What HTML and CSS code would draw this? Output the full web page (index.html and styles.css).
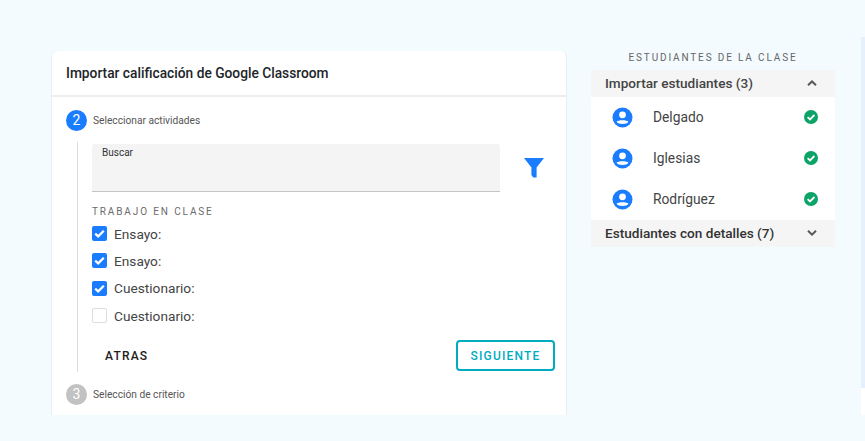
FILE: index.html
```html
<!DOCTYPE html>
<html lang="es">
<head>
    <meta charset="UTF-8">
    <meta name="viewport" content="width=device-width, initial-scale=1.0">
    <title>Importar calificación de Google Classroom</title>
    <link rel="stylesheet" href="styles.css">
</head>
<body>
    <div class="page">
        <div class="card">
            <div class="card-title">Importar calificación de Google Classroom</div>
            <div class="card-body">
                <div class="step">
                    <span class="step-num">2</span>
                    <span class="step-label">Seleccionar actividades</span>
                </div>
                <div class="step-content">
                    <div class="search-row">
                        <div class="search-field">Buscar</div>
                        <svg class="filter-icon" width="22" height="22" viewBox="0 0 22 22">
                            <path d="M1 1H21L13.6 10.6V20.5L10.2 20.5 8.4 18V10.6Z" fill="#1a7cff"/>
                        </svg>
                    </div>
                    <div class="section-label">TRABAJO EN CLASE</div>
                    <div class="check-row">
                        <span class="checkbox checked">
                            <svg width="15" height="15" viewBox="0 0 15 15"><path d="M3.2 7.6L6.2 10.4L11.8 4.8" fill="none" stroke="#fff" stroke-width="2.2"/></svg>
                        </span>
                        Ensayo:
                    </div>
                    <div class="check-row">
                        <span class="checkbox checked">
                            <svg width="15" height="15" viewBox="0 0 15 15"><path d="M3.2 7.6L6.2 10.4L11.8 4.8" fill="none" stroke="#fff" stroke-width="2.2"/></svg>
                        </span>
                        Ensayo:
                    </div>
                    <div class="check-row">
                        <span class="checkbox checked">
                            <svg width="15" height="15" viewBox="0 0 15 15"><path d="M3.2 7.6L6.2 10.4L11.8 4.8" fill="none" stroke="#fff" stroke-width="2.2"/></svg>
                        </span>
                        Cuestionario:
                    </div>
                    <div class="check-row">
                        <span class="checkbox"></span>
                        Cuestionario:
                    </div>
                    <div class="actions">
                        <button class="btn-back">ATRAS</button>
                        <button class="btn-next">SIGUIENTE</button>
                    </div>
                </div>
                <div class="step step-off">
                    <span class="step-num">3</span>
                    <span class="step-label">Selección de criterio</span>
                </div>
            </div>
        </div>

        <div class="side">
            <div class="side-title">ESTUDIANTES DE LA CLASE</div>
            <div class="group-head">
                Importar estudiantes (3)
                <svg width="12" height="8" viewBox="0 0 12 8"><path d="M2 6.2L6 2.4L10 6.2" fill="none" stroke="#55595c" stroke-width="2"/></svg>
            </div>
            <div class="student">
                <svg class="avatar" width="21" height="21" viewBox="0 0 21 21">
                    <circle cx="10.5" cy="10.5" r="10" fill="#1a7cff"/>
                    <circle cx="10.5" cy="7.8" r="3.4" fill="#fff"/>
                    <path d="M4.6 14.8C6 12.8 15 12.8 16.4 14.8C15 17.8 6 17.8 4.6 14.8Z" fill="#fff"/>
                </svg>
                <span class="student-name">Delgado</span>
                <svg width="14" height="14" viewBox="0 0 14 14"><circle cx="7" cy="7" r="7" fill="#0ba366"/><path d="M3.6 7.2L6 9.4L10.4 5" fill="none" stroke="#fff" stroke-width="1.8"/></svg>
            </div>
            <div class="student">
                <svg class="avatar" width="21" height="21" viewBox="0 0 21 21">
                    <circle cx="10.5" cy="10.5" r="10" fill="#1a7cff"/>
                    <circle cx="10.5" cy="7.8" r="3.4" fill="#fff"/>
                    <path d="M4.6 14.8C6 12.8 15 12.8 16.4 14.8C15 17.8 6 17.8 4.6 14.8Z" fill="#fff"/>
                </svg>
                <span class="student-name">Iglesias</span>
                <svg width="14" height="14" viewBox="0 0 14 14"><circle cx="7" cy="7" r="7" fill="#0ba366"/><path d="M3.6 7.2L6 9.4L10.4 5" fill="none" stroke="#fff" stroke-width="1.8"/></svg>
            </div>
            <div class="student">
                <svg class="avatar" width="21" height="21" viewBox="0 0 21 21">
                    <circle cx="10.5" cy="10.5" r="10" fill="#1a7cff"/>
                    <circle cx="10.5" cy="7.8" r="3.4" fill="#fff"/>
                    <path d="M4.6 14.8C6 12.8 15 12.8 16.4 14.8C15 17.8 6 17.8 4.6 14.8Z" fill="#fff"/>
                </svg>
                <span class="student-name">Rodríguez</span>
                <svg width="14" height="14" viewBox="0 0 14 14"><circle cx="7" cy="7" r="7" fill="#0ba366"/><path d="M3.6 7.2L6 9.4L10.4 5" fill="none" stroke="#fff" stroke-width="1.8"/></svg>
            </div>
            <div class="group-head group-dark">
                Estudiantes con detalles (7)
                <svg width="12" height="8" viewBox="0 0 12 8"><path d="M2 1.8L6 5.6L10 1.8" fill="none" stroke="#55595c" stroke-width="2"/></svg>
            </div>
        </div>

        <div class="edge"></div>
    </div>
</body>
</html>
```

FILE: styles.css
```css
html, body {
    margin: 0;
    height: 441px;
    overflow: hidden;
}
body {
    background-color: #f3fbff;
    font-family: Roboto, "Liberation Sans", sans-serif;
    color: #333;
}
.page {
    display: flex;
    align-items: flex-start;
    padding: 37px 0 0 52px;
}
.card {
    width: 514px;
    height: 364px;
    margin-top: 14px;
    background-color: #fff;
    border-right: 1px solid #e6eef3;
    border-radius: 6px 6px 0 0;
    box-shadow: -1px 0 0 #e8f0f4;
}
.card-title {
    height: 44px;
    line-height: 45px;
    padding-left: 14px;
    font-size: 13.75px;
    font-weight: 500;
    color: #212529;
    border-bottom: 2px solid #eeeeee;
}
.card-body {
    padding: 12px 11px 0 14px;
}
.step {
    display: flex;
    align-items: center;
    gap: 6px;
    height: 22px;
}
.step-num {
    width: 21px;
    height: 21px;
    border-radius: 50%;
    background-color: #1a7cff;
    color: #fff;
    font-size: 14px;
    line-height: 21px;
    text-align: center;
}
.step-label {
    font-size: 10.2px;
    color: #555;
}
.step-off {
    margin-top: 11px;
}
.step-off .step-num {
    background-color: #c2c2c2;
}
.step-content {
    margin: 11px 0 0 11px;
    padding: 2px 0 0 14px;
    height: 228px;
    border-left: 1px solid #dcdcdc;
}
.search-row {
    display: flex;
    align-items: center;
}
.search-field {
    width: 408px;
    height: 48px;
    padding: 3px 0 0 10px;
    box-sizing: border-box;
    background-color: #f4f4f4;
    border-bottom: 1px solid #c4c4c4;
    border-radius: 3px 3px 0 0;
    font-size: 10px;
    color: #333;
}
.filter-icon {
    margin: 0 0 0 23px;
}
.section-label {
    margin-top: 14px;
    font-size: 10px;
    letter-spacing: 1.87px;
    color: #6b6b6b;
}
.check-row {
    display: flex;
    align-items: center;
    gap: 7px;
    height: 27.3px;
    font-size: 13.7px;
    color: #444;
}
.section-label + .check-row {
    margin-top: 3px;
}
.checkbox {
    display: flex;
    width: 15px;
    height: 15px;
    box-sizing: border-box;
    border: 1px solid #ddd;
    border-radius: 2px;
    background-color: #fff;
}
.checkbox.checked {
    border: 0;
    background-color: #1a7cff;
}
.actions {
    display: flex;
    justify-content: space-between;
    align-items: center;
    margin-top: 11px;
}
.actions button {
    font-family: inherit;
    font-size: 12px;
    font-weight: 500;
    letter-spacing: 1.2px;
    background: none;
    cursor: pointer;
}
.btn-back {
    border: 0;
    padding: 0 0 0 13px;
    color: #212121;
}
.btn-next {
    width: 99px;
    height: 31px;
    padding: 0;
    border: 2px solid #00acc1;
    border-radius: 4px;
    color: #00acc1;
    letter-spacing: 1px;
}
.side {
    width: 244px;
    margin-left: 24px;
}
.side-title {
    height: 33px;
    padding-top: 14px;
    box-sizing: border-box;
    font-size: 10px;
    line-height: 13px;
    letter-spacing: 1.85px;
    text-align: center;
    color: #666;
}
.group-head {
    display: flex;
    justify-content: space-between;
    align-items: center;
    height: 27px;
    box-sizing: border-box;
    padding: 0 17px 1px 14px;
    background-color: #f5f5f5;
    font-size: 13.6px;
    font-weight: 500;
    color: #444;
}
.group-dark {
    color: #333;
}
.student {
    display: flex;
    align-items: center;
    height: 41px;
    box-sizing: border-box;
    padding: 0 17px 1px 21px;
    background-color: #fff;
    font-size: 13.8px;
    color: #444;
}
.student-name {
    flex: 1;
    margin-left: 20px;
}
.edge {
    width: 4px;
    height: 351px;
    margin-left: 26px;
    background-color: #e6f0fd;
    box-shadow: 0 27px 0 #fff;
}
```
